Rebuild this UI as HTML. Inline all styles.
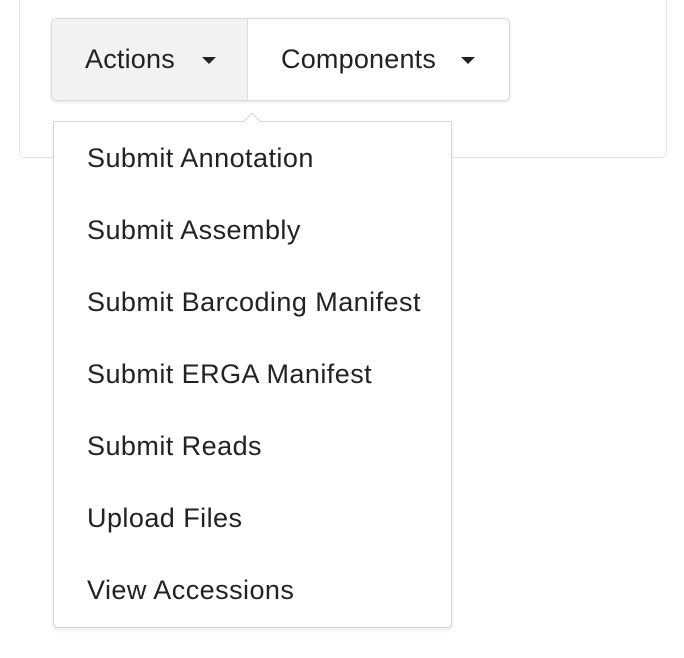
<!DOCTYPE html>
<html><head><style>
html,body{margin:0;padding:0;background:#fff;width:684px;height:658px;overflow:hidden;font-family:"Liberation Sans",sans-serif;color:#222;}
.card{position:absolute;left:19px;top:-20px;width:646px;height:176px;border:1px solid #e3e5e8;border-radius:5px;background:#fff;}
.grp{position:absolute;left:51px;top:18px;width:457px;height:81px;border:1px solid #d9d9d9;border-radius:5px;box-shadow:0 1px 3px rgba(0,0,0,.12);overflow:hidden;background:#fff;}
.b{position:absolute;top:0;height:81px;line-height:81px;font-size:27px;letter-spacing:0.2px;}
.b1{left:0;width:195px;background:#f2f2f2;border-right:1px solid #dcdcdc;}
.b2{left:196px;width:261px;}
.tri{position:absolute;top:38px;width:0;height:0;border-left:7px solid transparent;border-right:7px solid transparent;border-top:7px solid #222;}
.menu{position:absolute;left:53px;top:121px;width:397px;height:505px;border:1px solid #d4d4d5;border-radius:0 0 4px 4px;background:#fff;box-shadow:0 2px 4px rgba(0,0,0,.08);}
.arrow{position:absolute;left:246px;top:115px;width:11px;height:11px;background:#fff;border-left:1px solid #d4d4d5;border-top:1px solid #d4d4d5;transform:rotate(45deg);}
.it{position:absolute;left:33px;font-size:27px;letter-spacing:0.45px;line-height:30px;}
</style></head><body>
<div class="card"></div>
<div class="grp">
<div class="b b1"><span style="position:absolute;left:33px">Actions</span><div class="tri" style="left:150px"></div></div>
<div class="b b2"><span style="position:absolute;left:33px">Components</span><div class="tri" style="left:213px"></div></div>
</div>
<div class="menu">
<div class="it" style="top:21px">Submit Annotation</div>
<div class="it" style="top:93px">Submit Assembly</div>
<div class="it" style="top:165px">Submit Barcoding Manifest</div>
<div class="it" style="top:237px">Submit ERGA Manifest</div>
<div class="it" style="top:309px">Submit Reads</div>
<div class="it" style="top:381px">Upload Files</div>
<div class="it" style="top:453px">View Accessions</div>
</div>
<div class="arrow"></div>
</body></html>
